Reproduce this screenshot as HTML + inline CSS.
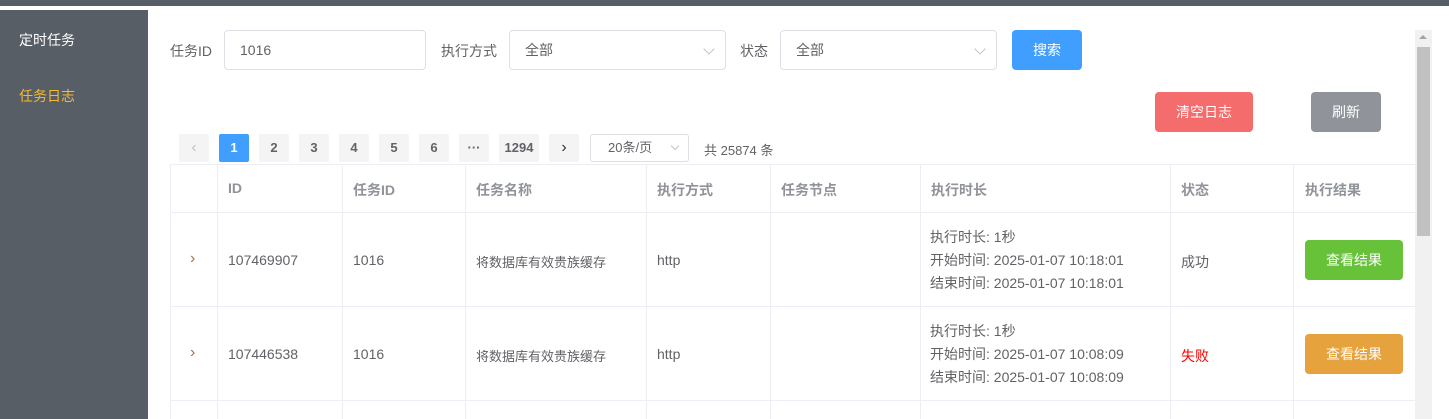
<!DOCTYPE html>
<html><head><meta charset="utf-8"><style>
*{box-sizing:border-box;margin:0;padding:0}
body{width:1449px;height:419px;overflow:hidden;background:#fff;font-family:"Liberation Sans","Noto Sans CJK SC",sans-serif;color:#606266;position:relative;font-size:14px}
.a{position:absolute}
.top{left:0;top:0;width:1449px;height:6px;background:#585e66}
.side{left:0;top:10px;width:148px;height:409px;background:#585e66}
.side div{position:absolute;left:19px;font-size:14px}
.lbl{font-size:14px;color:#606266;top:41px}
.inp{border:1px solid #dcdfe6;border-radius:4px;height:40px;top:30px;background:#fff;padding:0 0 0 15px;line-height:38px;font-size:14px;color:#606266}
.chev{position:absolute;right:12px;top:14px;width:8px;height:8px;border-right:1px solid #c0c4cc;border-bottom:1px solid #c0c4cc;transform:rotate(45deg)}
.btn{color:#fff;border-radius:4px;text-align:center;font-size:14px}
.pg{top:134px;height:28px;width:30px;background:#f4f4f5;border-radius:2px;text-align:center;line-height:28px;font-weight:bold;font-size:13px;color:#606266}
.vl{position:absolute;top:164px;width:1px;height:255px;background:#ebeef5}
.hl{position:absolute;left:170px;width:1245px;height:1px;background:#ebeef5}
.th{top:180px;font-weight:bold;color:#909399;font-size:14px}
.td{font-size:14px;color:#606266}
.ex{font-size:14px;color:#606266;line-height:23px}
</style></head><body>
<div class="a top"></div>
<div class="a side"><div style="top:20px;color:#fff">定时任务</div><div style="top:76px;color:#f7ba2a">任务日志</div></div>

<div class="a lbl" style="left:170px">任务ID</div>
<div class="a inp" style="left:224px;width:202px">1016</div>
<div class="a lbl" style="left:441px">执行方式</div>
<div class="a inp" style="left:509px;width:217px">全部<span class="chev"></span></div>
<div class="a lbl" style="left:740px">状态</div>
<div class="a inp" style="left:780px;width:217px">全部<span class="chev"></span></div>
<div class="a btn" style="left:1012px;top:30px;width:70px;height:40px;line-height:40px;background:#409eff">搜索</div>
<div class="a btn" style="left:1155px;top:92px;width:98px;height:40px;line-height:40px;background:#f56c6c">清空日志</div>
<div class="a btn" style="left:1311px;top:92px;width:70px;height:40px;line-height:40px;background:#909399">刷新</div>

<div class="a pg" style="left:179px;color:#c0c4cc;font-weight:normal;font-size:16px">‹</div>
<div class="a pg" style="left:219px;background:#409eff;color:#fff">1</div>
<div class="a pg" style="left:259px">2</div>
<div class="a pg" style="left:299px">3</div>
<div class="a pg" style="left:339px">4</div>
<div class="a pg" style="left:379px">5</div>
<div class="a pg" style="left:419px">6</div>
<div class="a pg" style="left:459px">···</div>
<div class="a pg" style="left:499px;width:40px">1294</div>
<div class="a pg" style="left:549px;font-weight:normal;font-size:16px;color:#303133">›</div>
<div class="a" style="left:590px;top:134px;width:99px;height:28px;border:1px solid #dcdfe6;border-radius:3px;font-size:13px;line-height:26px;padding-left:17px">20条/页<span class="chev" style="top:8px;right:10px;width:6px;height:6px"></span></div>
<div class="a" style="left:704px;top:140px;font-size:13px">共 25874 条</div>

<div class="hl" style="top:164px"></div>
<div class="hl" style="top:212px"></div>
<div class="hl" style="top:306px"></div>
<div class="hl" style="top:400px"></div>
<div class="vl" style="left:170px"></div>
<div class="vl" style="left:217px"></div>
<div class="vl" style="left:342px"></div>
<div class="vl" style="left:465px"></div>
<div class="vl" style="left:646px"></div>
<div class="vl" style="left:770px"></div>
<div class="vl" style="left:920px"></div>
<div class="vl" style="left:1170px"></div>
<div class="vl" style="left:1293px"></div>

<div class="a th" style="left:228px">ID</div>
<div class="a th" style="left:353px">任务ID</div>
<div class="a th" style="left:476px">任务名称</div>
<div class="a th" style="left:657px">执行方式</div>
<div class="a th" style="left:781px">任务节点</div>
<div class="a th" style="left:931px">执行时长</div>
<div class="a th" style="left:1181px">状态</div>
<div class="a th" style="left:1305px">执行结果</div>

<div class="a td" style="left:190px;top:250px;color:#a0705a;font-size:16px">›</div>
<div class="a td" style="left:228px;top:252px">107469907</div>
<div class="a td" style="left:353px;top:252px">1016</div>
<div class="a td" style="left:476px;top:252px;font-size:13px">将数据库有效贵族缓存</div>
<div class="a td" style="left:657px;top:252px">http</div>
<div class="a ex" style="left:930px;top:226px">执行时长: 1秒<br>开始时间: 2025-01-07 10:18:01<br>结束时间: 2025-01-07 10:18:01</div>
<div class="a td" style="left:1181px;top:252px">成功</div>
<div class="a btn" style="left:1305px;top:240px;width:98px;height:40px;line-height:40px;background:#67c23a">查看结果</div>

<div class="a td" style="left:190px;top:344px;color:#a0705a;font-size:16px">›</div>
<div class="a td" style="left:228px;top:346px">107446538</div>
<div class="a td" style="left:353px;top:346px">1016</div>
<div class="a td" style="left:476px;top:346px;font-size:13px">将数据库有效贵族缓存</div>
<div class="a td" style="left:657px;top:346px">http</div>
<div class="a ex" style="left:930px;top:320px">执行时长: 1秒<br>开始时间: 2025-01-07 10:08:09<br>结束时间: 2025-01-07 10:08:09</div>
<div class="a td" style="left:1181px;top:346px;color:#f00">失败</div>
<div class="a btn" style="left:1305px;top:334px;width:98px;height:40px;line-height:40px;background:#e6a23c">查看结果</div>

<div class="a" style="left:1415px;top:30px;width:17px;height:389px;background:#f1f1f1"></div>
<div class="a" style="left:1419px;top:35px;width:0;height:0;border-left:4px solid transparent;border-right:4px solid transparent;border-bottom:4px solid #a3a3a3"></div>
<div class="a" style="left:1417px;top:47px;width:13px;height:189px;background:#c1c1c1"></div>
</body></html>
